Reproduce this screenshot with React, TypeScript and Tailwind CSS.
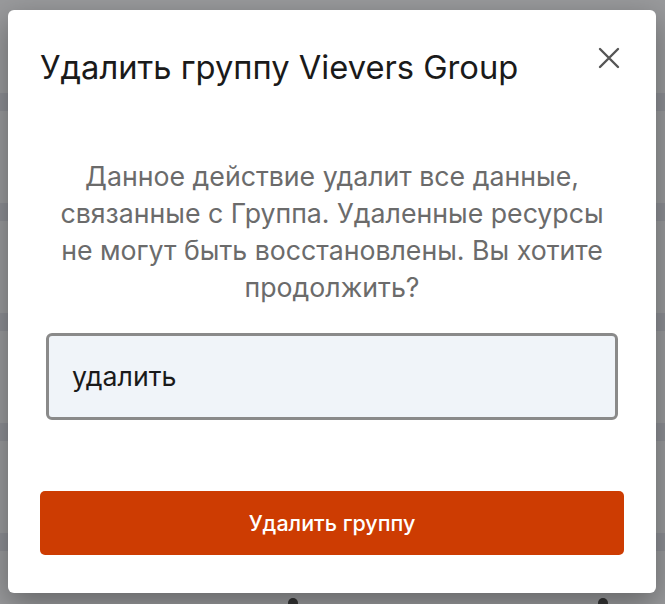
import React from "react";

export default function App() {
  const rows = [93, 203, 313, 423, 533];
  return (
    <div className="relative w-[665px] h-[604px] overflow-hidden bg-[#999a9c]" style={{ fontFamily: "Inter, 'Noto Sans', sans-serif" }}>
      {/* background page hints */}
      <div className="flex flex-col pt-[93px] gap-[92px]">
        {rows.map((r) => (
          <div key={r} className="h-[18px] bg-[#8d8f94]" />
        ))}
      </div>
      <div className="absolute left-[288px] top-[598px] w-[10px] h-[10px] rounded-full bg-[#333]" />
      <div className="absolute left-[598px] top-[598px] w-[10px] h-[10px] rounded-full bg-[#333]" />

      {/* modal */}
      <div className="absolute left-[8px] top-[10px] w-[648px] h-[583px] bg-white rounded-[6px] shadow-[0_10px_30px_rgba(0,0,0,0.35)] flex flex-col">
        <div className="flex items-start justify-between pl-[32px] pr-[36px] pt-[37px]">
          <h2 className="text-[32.7px] leading-[40px] text-[#1a1a1a] font-normal">Удалить группу Vievers Group</h2>
          <button className="mt-[0px] w-[22px] h-[22px] flex items-center justify-center text-[#555]">
            <svg width="22" height="22" viewBox="0 0 22 22" fill="none" stroke="currentColor" strokeWidth="2.4" strokeLinecap="round">
              <path d="M2 2 L20 20 M20 2 L2 20" />
            </svg>
          </button>
        </div>
        <p className="mt-[71px] px-[30px] text-center text-[26.7px] leading-[37px] text-[#6b6b6b]">
          Данное действие удалит все данные,
          <br />
          связанные с Группа. Удаленные ресурсы
          <br />
          не могут быть восстановлены. Вы хотите
          <br />
          продолжить?
        </p>
        <div className="mt-[27px] px-[38px]">
          <div className="h-[87px] rounded-[6px] border-[3px] border-[#8a8a8a] bg-[#f0f4f9] flex items-center pl-[23px] text-[26.7px] text-[#1a1a1a]">
            удалить
          </div>
        </div>
        <div className="mt-auto px-[32px] pb-[38px]">
          <button className="w-full h-[64px] rounded-[5px] bg-[#cd3c02] text-white text-[21.5px] font-medium">
            Удалить группу
          </button>
        </div>
      </div>
    </div>
  );
}
